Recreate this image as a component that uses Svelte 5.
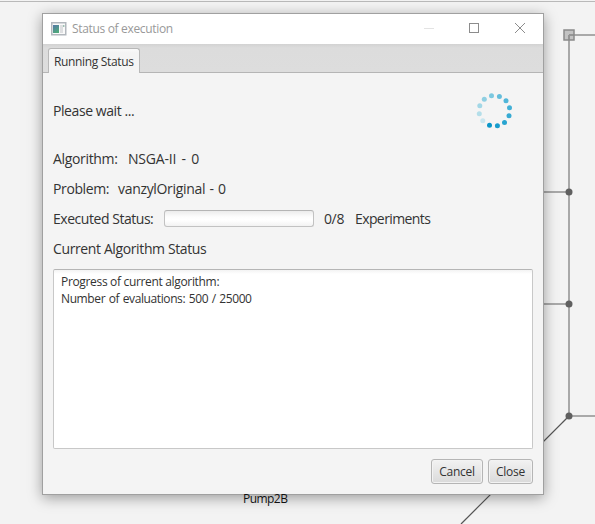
<script>
  const dots = [
    [19.5, 40.3, '#0a96c8'], [27.4, 40.7, '#189dcd'], [34.5, 37.4, '#28a4d0'], [39, 30.8, '#36aad3'],
    [39.5, 22.8, '#42b0d6'], [36, 15.8, '#50b6d9'], [29.4, 11.5, '#64bddb'], [21.5, 10.8, '#7bc8e0'],
    [14.3, 14.3, '#8fcfe2'], [9.8, 20.8, '#a2d7e6'], [9.3, 28.8, '#b4dee9'], [12.8, 35.8, '#c8e5ee'],
  ];
  const progress = 0;
</script>

<main class="desktop">
  <svg class="network" width="595" height="524" viewBox="0 0 595 524">
    <path d="M0 1.5H595" stroke="#b9b9b9" />
    <path d="M569 35V416M569 35H595M569 416H595M540 192H569M540 304H569" fill="none" stroke="#a9a9a9" stroke-width="2" />
    <path d="M569 416L461 524" stroke="#555" stroke-width="1.2" />
    <rect x="564" y="30" width="10" height="10" fill="#777" fill-opacity=".38" stroke="#8b8b8b" stroke-width="1.5" />
    <circle cx="569" cy="192" r="3.5" fill="#606060" />
    <circle cx="569" cy="304" r="3.5" fill="#606060" />
    <circle cx="569" cy="416" r="3.5" fill="#606060" />
  </svg>

  <section class="window">
    <header class="titlebar">
      <svg class="appicon" width="16" height="14" viewBox="0 0 16 14">
        <defs>
          <linearGradient id="pane" x1="0" y1="0" x2=".5" y2="1">
            <stop offset="0" stop-color="#5577a8" /><stop offset="1" stop-color="#4fa87c" />
          </linearGradient>
        </defs>
        <rect x=".75" y=".75" width="14" height="12" fill="#fafafa" stroke="#b2b7bd" stroke-width="1.5" />
        <rect x="2" y="3" width="6" height="8" fill="url(#pane)" />
        <rect x="9" y="3" width="3" height="8" fill="#dedfe1" />
        <path d="M12.8 3v2" stroke="#77a894" />
      </svg>
      <h1>Status of execution</h1>
      <div class="controls">
        <svg width="46" height="30"><path d="M11 14.5H21" stroke="#e3e3e3" /></svg>
        <svg width="46" height="30"><rect x="10.5" y="9.5" width="9" height="9" fill="none" stroke="#8c8c8c" /></svg>
        <svg width="38" height="30"><path d="M10 9L20 19M20 9L10 19" stroke="#8c8c8c" /></svg>
      </div>
    </header>
    <nav class="tabs"><div class="tab"><span>Running Status</span></div></nav>
    <div class="body">
      <div class="wait">
        <span class="please">Please wait ...</span>
        <svg class="spinner" width="50" height="50">
          {#each dots as [x, y, color]}<circle cx={x} cy={y} r="2.5" fill={color} />{/each}
        </svg>
      </div>
      <div class="row"><span class="l-alg">Algorithm:</span><span class="v-alg">NSGA-II - 0</span></div>
      <div class="row"><span class="l-prob">Problem:</span><span class="v-prob">vanzylOriginal - 0</span></div>
      <div class="row">
        <span class="l-exec">Executed Status:</span>
        <div class="bar"><div class="fill" style="width: {progress}%"></div></div>
        <span class="count">0/8</span><span class="exp">Experiments</span>
      </div>
      <div class="row"><span class="current">Current Algorithm Status</span></div>
      <div class="log">
        <div><span class="log1">Progress of current algorithm:</span></div>
        <div><span class="log2">Number of evaluations: 500 / 25000</span></div>
      </div>
      <footer>
        <button class="cancel"><span>Cancel</span></button>
        <button class="close"><span>Close</span></button>
      </footer>
    </div>
  </section>
  <div class="pump">Pump2B</div>
</main>

<style>
  .desktop {
    position: relative;
    box-sizing: border-box;
    width: 595px;
    height: 524px;
    padding: 13px 0 0 42px;
    overflow: hidden;
    background: #f3f3f3;
    color: #333;
    font: 12px 'Open Sans', 'Noto Sans', sans-serif;
    white-space: nowrap;
  }
  .network { position: absolute; left: 0; top: 0; }
  .window {
    position: relative;
    display: flex;
    flex-direction: column;
    box-sizing: border-box;
    width: 502px;
    height: 482px;
    border: 1px solid #a0a0a0;
    background: #f4f4f4;
    box-shadow: 0 3px 13px rgba(0, 0, 0, .36);
  }
  .titlebar { display: flex; align-items: center; height: 30px; background: #fff; }
  .appicon { margin: 0 5px 1px 8px; }
  h1 { flex: 1; margin: 0 0 1px; color: #999; font-size: 12px; font-weight: 400; letter-spacing: -.33px; }
  .controls { display: flex; }
  .tabs {
    display: flex;
    align-items: flex-end;
    box-sizing: border-box;
    height: 29px;
    padding-left: 5px;
    border-bottom: 1px solid #b5b5b5;
    background: linear-gradient(#d2d2d2, #dcdcdc 4px, #ddd);
  }
  .tab {
    box-sizing: border-box;
    width: 92px;
    height: 25px;
    margin-bottom: -1px;
    padding-left: 5px;
    border: 1px solid #b8b8b8;
    border-bottom: 0;
    border-radius: 3px 3px 0 0;
    background: linear-gradient(#fafafa, #f4f4f4 4px);
    line-height: 25px;
    letter-spacing: -.34px;
  }
  .body { display: flex; flex-direction: column; padding: 12px 10px 0; }
  .wait {
    display: flex;
    align-items: center;
    justify-content: space-between;
    height: 50px;
    margin-bottom: 9px;
    padding-right: 13px;
    font-size: 14px;
  }
  .row { display: flex; align-items: center; gap: 10px; height: 30px; font-size: 14px; }
  .row span { margin-top: -2px; letter-spacing: -.38px; }
  .please { letter-spacing: -.42px; }
  .l-alg { width: 65px; }
  .row .l-alg { letter-spacing: -.33px; }
  .row .v-alg { letter-spacing: -.2px; word-spacing: 2px; }
  .l-prob { width: 55px; }
  .row .v-prob { letter-spacing: -.32px; word-spacing: 1px; }
  .l-exec { width: 101px; }
  .row .l-exec { letter-spacing: -.46px; }
  .row .exp { letter-spacing: -.6px; }
  .count { width: 21px; }
  .bar {
    box-sizing: border-box;
    width: 150px;
    height: 17px;
    margin-top: -1px;
    border: 1px solid #c2c2c2;
    border-top-color: #b5b5b5;
    border-radius: 3px;
    background: linear-gradient(#ececec, #fdfdfd 6px, #fff 9px, #f2f2f2);
  }
  .fill { height: 100%; background: #0096c9; }
  .log {
    box-sizing: border-box;
    height: 180px;
    margin-top: 5px;
    padding: 3px 7px;
    border: 1px solid #c8c8c8;
    border-top-color: #b5b5b5;
    border-radius: 2px;
    background: linear-gradient(#f3f3f3, #fff 4px);
    line-height: 17px;
    letter-spacing: -.33px;
  }
  .log2 { letter-spacing: -.39px; word-spacing: .8px; }
  footer { display: flex; justify-content: flex-end; gap: 5px; margin-top: 10px; }
  button {
    box-sizing: border-box;
    height: 25px;
    padding: 0;
    border: 1px solid #b5b5b5;
    border-radius: 3px;
    background: linear-gradient(#f2f2f2, #dadada);
    box-shadow: inset 0 0 0 1px #f3f3f3;
    color: #333;
    font: 12px 'Open Sans', 'Noto Sans', sans-serif;
    letter-spacing: -.25px;
  }
  .cancel { width: 52px; }
  .close { width: 45px; }
  .pump { position: absolute; left: 243px; top: 491px; color: #111; line-height: 16px; letter-spacing: -.55px; }
</style>
